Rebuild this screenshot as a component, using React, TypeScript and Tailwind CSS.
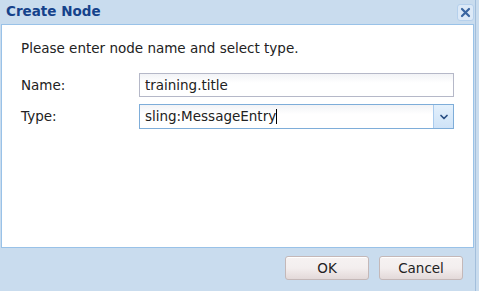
import { ChevronDown } from 'lucide-react';

export default function App() {
  return (
    <div
      className="w-[479px] h-[291px] bg-[#c9dcee] overflow-hidden"
      style={{ fontFamily: 'Tahoma, "DejaVu Sans", Verdana, sans-serif' }}
    >
      <div className="w-[476px] h-[291px] flex flex-col border-r border-[#a3bfdc]">
        {/* Title bar */}
        <div className="h-[24px] flex items-center justify-between pl-[6px] pr-[1px]">
          <span className="text-[13.5px] font-bold text-[#15428b] leading-none">Create Node</span>
          <div className="shrink-0 w-[17px] h-[17px] rounded-[3px] bg-[#dce9f7] border border-[#b5d0ec] flex items-center justify-center">
            <svg width="11" height="11" viewBox="0 0 11 11">
              <path d="M2 2 L9 9 M9 2 L2 9" stroke="#3a65a0" strokeWidth="2.2" strokeLinecap="round" />
            </svg>
          </div>
        </div>

        {/* Body */}
        <div className="mx-[1px] h-[224px] bg-white border border-[#99c2e8] px-[19px] pt-[15px] text-[13.5px] text-[#222]">
          <p className="leading-[16px]">Please enter node name and select type.</p>
          <div className="mt-[17px] flex items-center">
            <span className="w-[119px]">Name:</span>
            <div className="w-[318px] h-[24px] border border-[#b5b8c8] bg-gradient-to-b from-[#f2f3f6] to-white to-[40%] flex items-center px-[5px]">
              training.title
            </div>
          </div>
          <div className="mt-[7px] flex items-center">
            <span className="w-[119px]">Type:</span>
            <div className="w-[318px] h-[25px] border border-[#7eadd9] flex">
              <div className="flex-1 flex items-center px-[5px] bg-gradient-to-b from-[#f2f3f6] to-white to-[40%]">
                sling:MessageEntry<span className="w-[1px] h-[15px] bg-black" />
              </div>
              <div className="w-[20px] border-l border-[#a9cbee] bg-gradient-to-b from-[#e3f0fc] to-[#cfe3f7] flex items-center justify-center">
                <ChevronDown size={12} strokeWidth={3.5} color="#2a4f84" />
              </div>
            </div>
          </div>
        </div>

        {/* Footer */}
        <div className="flex-1 flex justify-end items-start pt-[8px] pr-[12px] gap-[10px]">
          <button className="w-[84px] h-[24px] rounded-[3px] border border-[#c4b8b8] bg-gradient-to-b from-[#f6f2f2] via-[#f3eeee] to-[#e3d9d9] text-[13.5px] text-[#222] shadow-[inset_0_1px_0_#fff]">
            OK
          </button>
          <button className="w-[84px] h-[24px] rounded-[3px] border border-[#c4b8b8] bg-gradient-to-b from-[#f6f2f2] via-[#f3eeee] to-[#e3d9d9] text-[13.5px] text-[#222] shadow-[inset_0_1px_0_#fff]">
            Cancel
          </button>
        </div>
      </div>
    </div>
  );
}
